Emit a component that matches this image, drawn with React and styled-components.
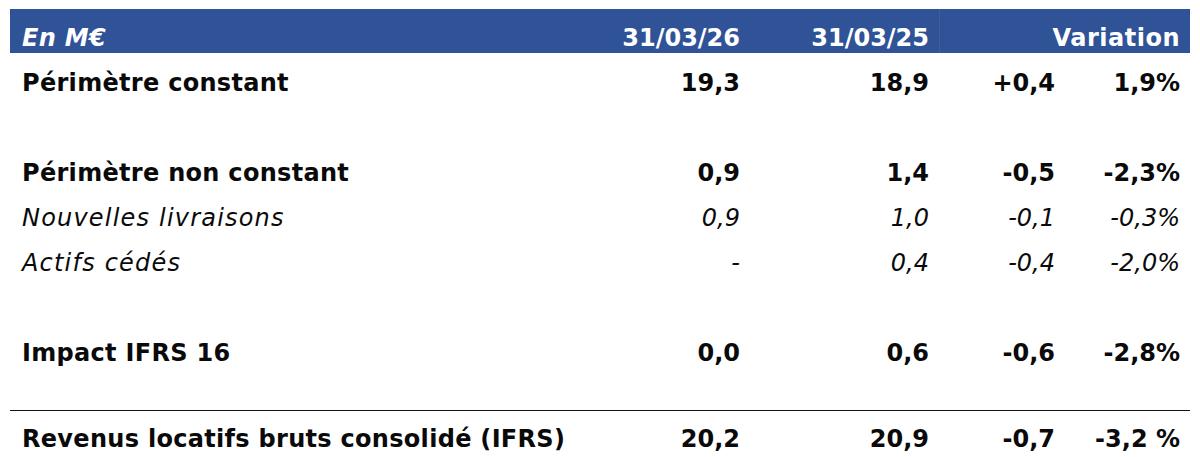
import React from "react";
import styled, { createGlobalStyle } from "styled-components";

// Revenus locatifs - tableau de variation
const rows = [
  { label: "Périmètre constant", values: ["19,3", "18,9", "+0,4", "1,9%"], kind: "main" },
  { spacer: true },
  { label: "Périmètre non constant", values: ["0,9", "1,4", "-0,5", "-2,3%"], kind: "main" },
  { label: "Nouvelles livraisons", values: ["0,9", "1,0", "-0,1", "-0,3%"], kind: "sub" },
  { label: "Actifs cédés", values: ["-", "0,4", "-0,4", "-2,0%"], kind: "sub" },
  { spacer: true },
  { label: "Impact IFRS 16", values: ["0,0", "0,6", "-0,6", "-2,8%"], kind: "main" },
];

const total = { label: "Revenus locatifs bruts consolidé (IFRS)", values: ["20,2", "20,9", "-0,7", "-3,2 %"] };

function App() {
  return (
    <>
      <GlobalStyle />
      <Page>
        <Table>
          <HeaderRow>
            <Cell $italic>En M€</Cell>
            <Cell $num>31/03/26</Cell>
            <Cell $num>31/03/25</Cell>
            <VariationHead>Variation</VariationHead>
          </HeaderRow>

          {rows.map((row, i) =>
            row.spacer ? (
              <Spacer key={i} />
            ) : (
              <Row key={i}>
                <Cell $italic={row.kind === "sub"} $light={row.kind === "sub"}>
                  {row.label}
                </Cell>
                {row.values.map((v, j) => (
                  <Cell key={j} $num $italic={row.kind === "sub"} $light={row.kind === "sub"}>
                    {v}
                  </Cell>
                ))}
              </Row>
            )
          )}

          <GapBeforeTotal />
          <TotalRow>
            <Cell>{total.label}</Cell>
            {total.values.map((v, j) => (
              <Cell key={j} $num>
                {v}
              </Cell>
            ))}
          </TotalRow>
        </Table>
      </Page>
    </>
  );
}

export default App;

const GlobalStyle = createGlobalStyle`
  html, body {
    margin: 0;
    padding: 0;
    background: #fff;
  }
  body {
    font-family: "DejaVu Sans", "Liberation Sans", sans-serif;
    color: #0a0a0a;
  }
`;

const Page = styled.div`
  padding: 9px 10px 0 10px;
`;

const Table = styled.div`
  width: 1180px;
`;

const Row = styled.div`
  display: grid;
  grid-template-columns: 550px 190px 189px 126px 125px;
  align-items: end;
  height: 45px;
  box-sizing: border-box;
  padding-bottom: 3px;
`;

const HeaderRow = styled(Row)`
  height: 44px;
  background-color: #2f5396;
  color: #fff;
  grid-template-columns: 550px 190px 189px 251px;
`;

const TotalRow = styled(Row)`
  height: 46px;
  border-top: 1.5px solid #111;
  padding-bottom: 5px;
`;

const Spacer = styled.div`
  height: 45px;
`;

const GapBeforeTotal = styled.div`
  height: 42px;
`;

const Cell = styled.div`
  font-size: 24px;
  line-height: 24px;
  white-space: nowrap;
  font-weight: ${(p) => (p.$light ? 400 : 700)};
  font-style: ${(p) => (p.$italic ? "italic" : "normal")};
  letter-spacing: ${(p) => (p.$num ? "0" : p.$light ? "1.2px" : "0.3px")};
  text-align: ${(p) => (p.$num ? "right" : "left")};
  padding: ${(p) => (p.$num ? "0 10px 0 0" : "0 0 0 12px")};
`;

const VariationHead = styled.div`
  align-self: stretch;
  display: flex;
  align-items: flex-end;
  justify-content: flex-end;
  padding-right: 10px;
  margin-bottom: -3px;
  padding-bottom: 3px;
  border-left: 1px solid rgba(255, 255, 255, 0.07);
  font-size: 24px;
  line-height: 24px;
  font-weight: 700;
  letter-spacing: 0.5px;
`;
